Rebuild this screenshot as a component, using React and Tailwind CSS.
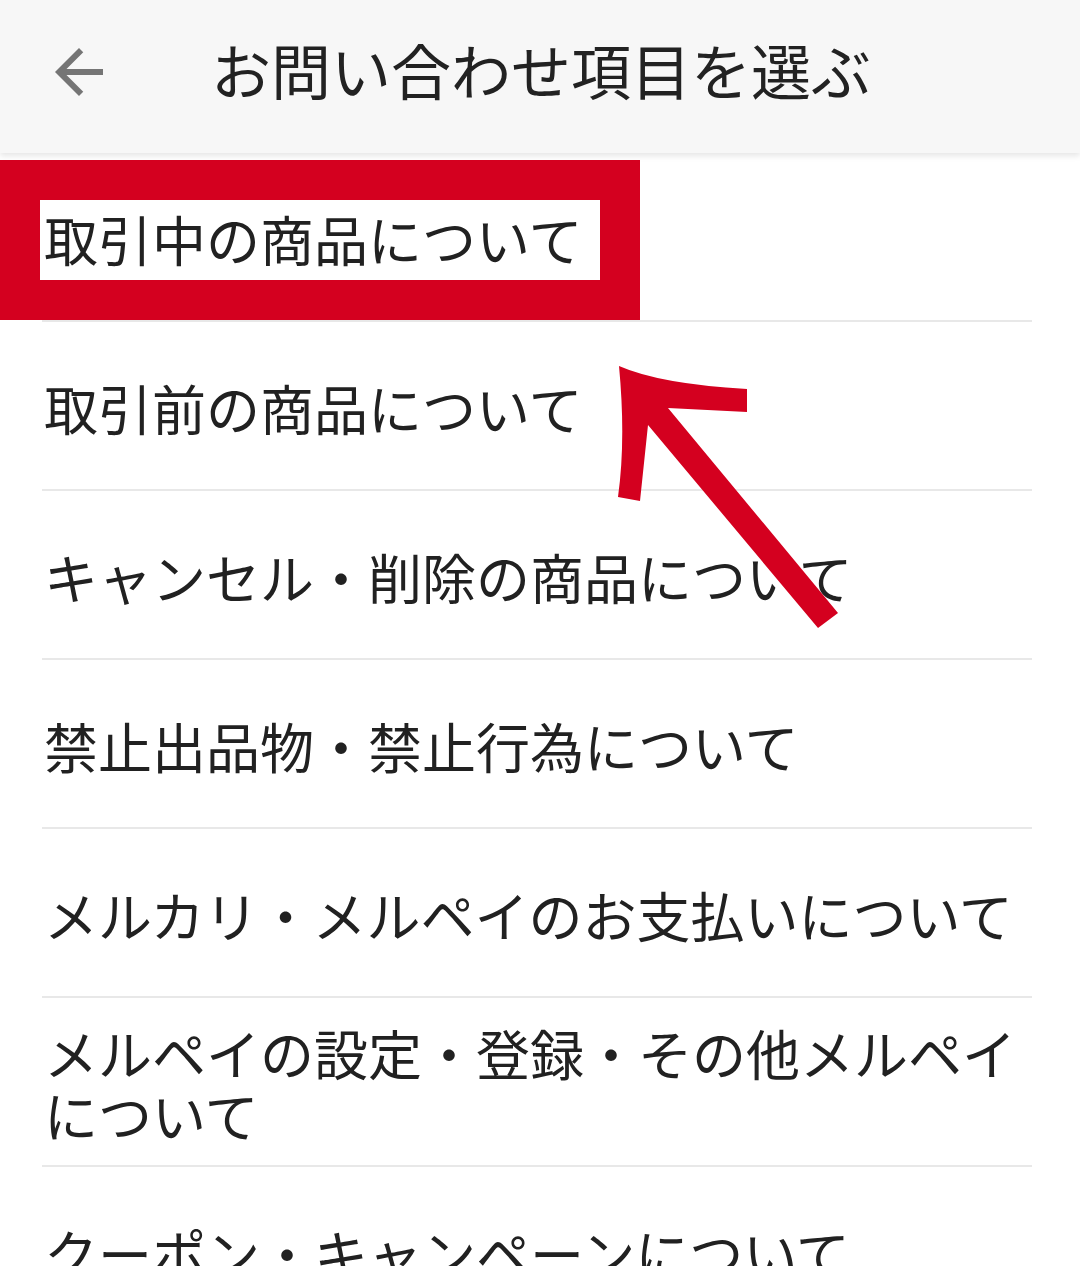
import React from "react";

const font = { fontFamily: '"Noto Sans CJK JP", "Noto Sans", sans-serif' };

const rows = [
  "取引中の商品について",
  "取引前の商品について",
  "キャンセル・削除の商品について",
  "禁止出品物・禁止行為について",
  "メルカリ・メルペイのお支払いについて",
  "メルペイの設定・登録・その他メルペイについて",
  "クーポン・キャンペーンについて",
];

export default function App() {
  return (
    <div className="relative w-[1080px] h-[1266px] overflow-hidden bg-white text-[#212121]" style={font}>
      <header className="relative z-10 h-[153px] bg-[#f7f7f7] shadow-[0_3px_6px_rgba(0,0,0,0.10)] flex items-center pb-[16px]">
        <div className="pl-[43px] flex items-center pt-[6px]">
          <svg width="72" height="72" viewBox="0 0 24 24" fill="#757575">
            <path d="M20 11H7.83l5.59-5.59L12 4l-8 8 8 8 1.41-1.41L7.83 13H20v-2z" />
          </svg>
        </div>
        <h1 className="ml-[96px] text-[60px] leading-[72px] font-normal text-[#222222] whitespace-nowrap">
          お問い合わせ項目を選ぶ
        </h1>
      </header>
      <ul className="ml-[42px] mr-[48px]">
        {rows.map((t) => (
          <li key={t} className="h-[169px] border-b-2 border-[#e8e8e8] flex items-center pt-[5px]">
            <span className="text-[54px] leading-[62px] pl-[2px]">{t}</span>
          </li>
        ))}
      </ul>
      <div className="absolute left-0 top-[160px] w-[640px] h-[160px] border-[40px] border-[#d4001f] z-20" />
      <svg className="absolute left-0 top-0 z-20 pointer-events-none" width="1080" height="1266">
        <path
          fill="#d4001f"
          d="M619 366 Q660 384 747 389 L747 412 L668 408 L838 613 L818 628 L648 425 L640 501 L618 497 Q626 440 619 366 Z"
        />
      </svg>
    </div>
  );
}
